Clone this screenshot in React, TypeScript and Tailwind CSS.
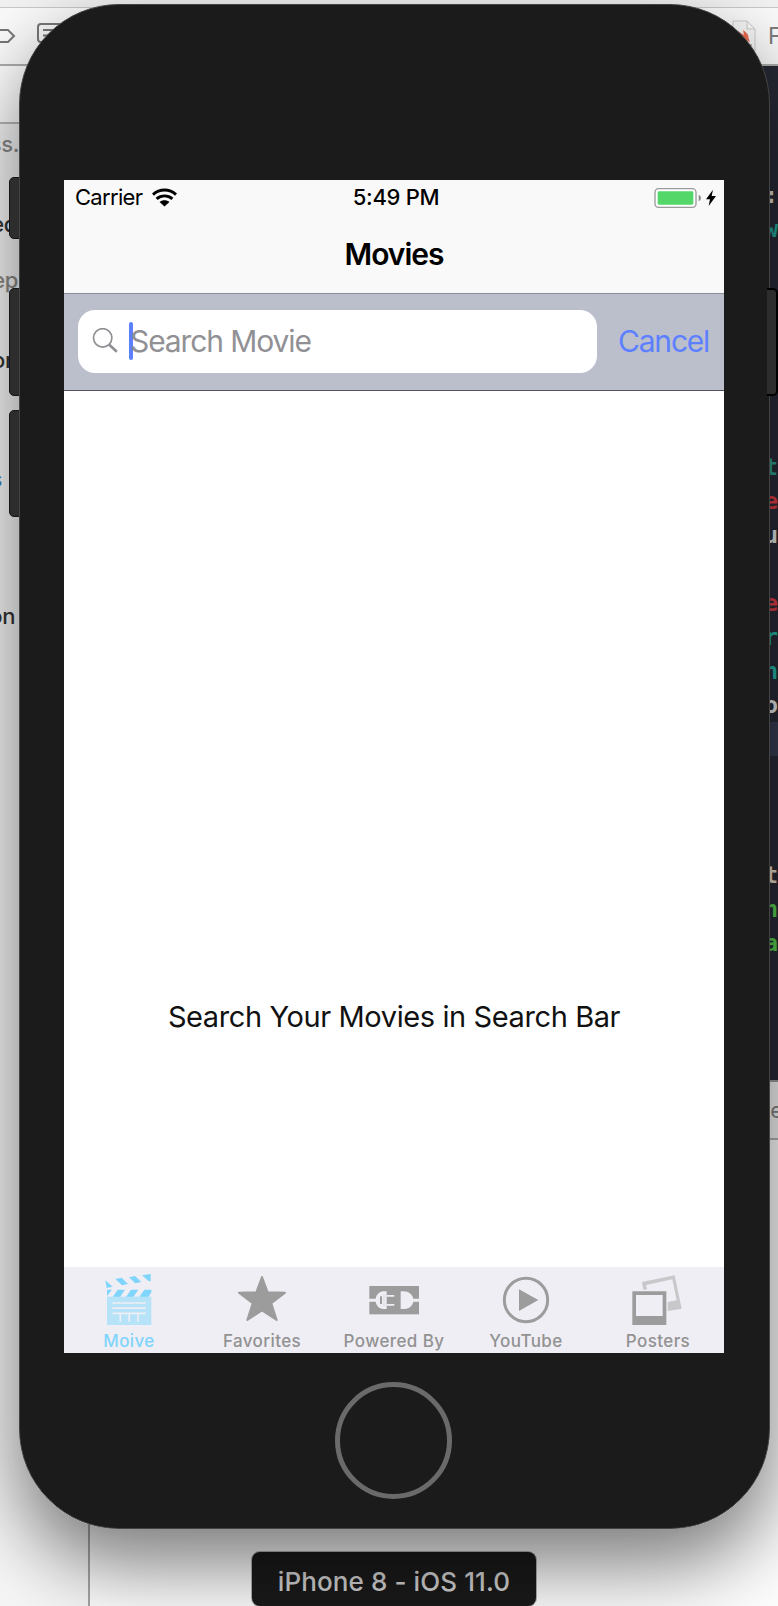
import type { ReactNode } from 'react';

const SYSTEM_FONT = "font-['Inter','Liberation_Sans',sans-serif]";

function ClapperIcon() {
  return (
    <svg viewBox="12 21 396 186" className="h-[62px] w-[132px]">
      <g fill="#7fd5fb">
        <path d="M136 61 L158 80 L140 84 Z" />
        <path d="M166 57 L185 53 L204 72 L186 76 Z" />
        <path d="M207 52 L225 48 L244 66 L226 70 Z" />
        <path d="M246 46 L272 42 V64 L266 63 Z" />
        <path d="M141 89 H156 L141 108 Z" />
        <path d="M173 89 H195 L180 111 H158 Z" />
        <path d="M213 89 H235 L220 111 H198 Z" />
        <path d="M253 89 H274 V97 L265 111 H238 Z" />
      </g>
      <rect x="141" y="110" width="133" height="85" fill="#b7e3f8" />
      <g stroke="#efeef4" strokeWidth="5">
        <path d="M157 129 H257 M157 144.500 H257 M157 160 H257" />
        <path d="M181 161 V185 M207.500 161 V185 M234 161 V185" />
      </g>
    </svg>
  );
}

function StarIcon() {
  return (
    <svg viewBox="408 21 396 186" className="h-[62px] w-[132px]">
      <path
        d="M606 51 L623 97 L675 98 L634 130 L650 180 L606 151 L562 180 L578 130 L537 98 L589 97 Z"
        fill="#9c9c9c"
        stroke="#9c9c9c"
        strokeWidth="6"
        strokeLinejoin="round"
      />
    </svg>
  );
}

function PlugIcon() {
  return (
    <svg viewBox="-96 -24 396 186" className="h-[62px] w-[132px]">
      <rect x="28" y="33" width="149" height="85" fill="#9c9c9c" />
      <g fill="#efeef4">
        <path d="M27 71 H47 C49 57 60 49 72 49 H80 V102 H72 C60 102 49 94 47 80 H27 Z" />
        <path d="M80 60 H103 V65 H80 Z M80 87 H103 V92 H80 Z" />
        <path d="M122 49 H130 C147 49 157 59 160 71 H178 V80 H160 C157 93 147 102 130 102 H122 Z" />
      </g>
      <rect x="60" y="64" width="6" height="23" fill="#9c9c9c" />
      <rect x="71" y="57" width="2" height="38" fill="#cfcfd3" />
    </svg>
  );
}

function PlayIcon() {
  return (
    <svg viewBox="180 21 396 186" className="h-[62px] w-[132px]">
      <circle cx="378" cy="120" r="65" fill="none" stroke="#9c9c9c" strokeWidth="9" />
      <path d="M357 88 L415 120 L357 153 Z" fill="#9c9c9c" />
    </svg>
  );
}

function PostersIcon() {
  return (
    <svg viewBox="576 21 396 186" className="h-[62px] w-[132px]">
      <g fill="#c8c8cb">
        <path d="M726 66 L824 46 L845 146 L803 153 V126 L830 121 L817 58 L738 75 L741 88 L730 89 Z" />
      </g>
      <path d="M697 94 H799 V195 H697 Z M708 105 V168 H788 V105 Z" fill="#9c9c9c" fillRule="evenodd" />
    </svg>
  );
}

function Tab({ icon, label, className }: { icon: ReactNode; label: string; className: string }) {
  return (
    <button className="flex w-[132px] flex-col items-center">
      {icon}
      <span className={`text-[17px] leading-[24px] font-medium tracking-[0.4px] whitespace-nowrap ${className}`}>{label}</span>
    </button>
  );
}

function StatusBar() {
  return (
    <div className="grid h-[35px] grid-cols-3 items-center text-black">
      <div className="flex items-center gap-[10px] pl-[11px]">
        <span className="text-[22px] leading-[35px] tracking-[-0.7px]">Carrier</span>
        <svg viewBox="278 40 76 56" className="h-[19px] w-[25px]">
          <g fill="none" stroke="#000" strokeWidth="9">
            <path d="M281 59 C301 41 331 41 351 59" />
            <path d="M292 72 C306 60 326 60 340 72" />
          </g>
          <path d="M301 82 C309 74 323 74 331 82 L316 95 Z" fill="#000" />
        </svg>
      </div>
      <span className="pl-[4px] text-center text-[22px] leading-[35px] font-medium tracking-[-0.3px] whitespace-nowrap">
        5:49 PM
      </span>
      <div className="flex justify-end pr-[8px]">
        <svg viewBox="760 36 186 66" className="h-[22px] w-[62px]">
          <rect x="763" y="41" width="123" height="56" rx="11" fill="#fff" stroke="#9a9a9a" strokeWidth="4" />
          <rect x="771" y="49" width="107" height="40" rx="4" fill="#53d769" />
          <path d="M894 59 Q901 62 901 69 Q901 76 894 79 Z" fill="#8c8c8c" />
          <path d="M937 44 L916 73 H928 L924 93 L946 63 H933 Z" fill="#000" />
        </svg>
      </div>
    </div>
  );
}

function SearchBar() {
  return (
    <div className="flex h-[98px] items-center border-y border-t-[#8b8d9a] border-b-[#55525f] bg-[#bbbfcc] pb-[2px] pl-[14px]">
      <div className="flex h-[63px] w-[519px] items-center rounded-[17px] bg-white pb-px pl-[14px]">
        <svg viewBox="94 460 78 76" className="h-[25px] w-[26px]">
          <circle cx="126" cy="490" r="28" fill="none" stroke="#8e8e93" strokeWidth="5" />
          <path d="M146 511 L169 532" stroke="#8e8e93" strokeWidth="8" />
        </svg>
        <span className="ml-[11px] h-[38px] w-[4px] rounded-sm bg-[#5c80ff]" />
        <span className="-ml-[3px] text-[30px] leading-[40px] tracking-[-1.1px] text-[#919195]">Search Movie</span>
      </div>
      <button className="ml-[21px] pb-px text-[30px] leading-[40px] tracking-[-1.2px] text-[#5c80ff]">Cancel</button>
    </div>
  );
}

function Screen() {
  return (
    <div className="flex h-[1173px] w-[660px] flex-col bg-white">
      <header className="h-[113px] bg-[#f9f9f9]">
        <StatusBar />
        <h1 className="text-center text-[30px] leading-[78px] font-semibold tracking-[-1px] text-black">Movies</h1>
      </header>
      <SearchBar />
      <main className="flex flex-1 flex-col items-center justify-end pb-[230px]">
        <p className="text-[29px] leading-[40px] tracking-[-0.4px] whitespace-nowrap text-[#111]">
          Search Your Movies in Search Bar
        </p>
      </main>
      <nav className="flex h-[86px] bg-[#efeef4]">
        <Tab icon={<ClapperIcon />} label="Moive" className="-ml-[2px] text-[#7fd5fb]" />
        <Tab icon={<StarIcon />} label="Favorites" className="text-[#929292]" />
        <Tab icon={<PlugIcon />} label="Powered By" className="text-[#929292]" />
        <Tab icon={<PlayIcon />} label="YouTube" className="text-[#929292]" />
        <Tab icon={<PostersIcon />} label="Posters" className="text-[#929292]" />
      </nav>
    </div>
  );
}

const codeLines = [
  { text: ':', className: 'text-[#d9d3cd]' },
  { text: 'w', className: 'text-[#22a598]' },
  { text: '', className: '' },
  { text: '', className: '' },
  { text: '', className: '' },
  { text: '', className: '' },
  { text: '', className: '' },
  { text: '', className: '' },
  { text: 't', className: 'text-[#2f9a8a]' },
  { text: 'e', className: 'text-[#d83a45]' },
  { text: 'u', className: 'text-[#e0e0e0]' },
  { text: '', className: '' },
  { text: 'e', className: 'text-[#d83a45]' },
  { text: 'r', className: 'text-[#24b0a2]' },
  { text: 'n', className: 'text-[#24b0a2]' },
  { text: 'o', className: 'text-[#e0e0e0]' },
  { text: '', className: 'bg-[#353a50]' },
  { text: '', className: '' },
  { text: '', className: '' },
  { text: '', className: '' },
  { text: 't', className: 'text-[#e0d4c4]' },
  { text: 'n', className: 'text-[#55c94d]' },
  { text: 'a', className: 'text-[#55c94d]' },
];

const sidebarLines = [
  { text: 'ss.', className: 'h-[80px] pr-0 text-[#8a8a8a]' },
  { text: 'ed', className: 'h-[56px] pr-[2px] text-[#333]' },
  { text: 'ep', className: 'h-[80px] pr-[1px] text-[#8a8a84]' },
  { text: 'or', className: 'h-[119px] pr-[6px] text-[#333]' },
  { text: 's', className: 'h-[137px] pr-[17px] text-[#3a7fb5]' },
  { text: 'on', className: 'h-[40px] pr-[4px] text-[#333]' },
];

function EditorWindow() {
  return (
    <div className="absolute inset-0 flex flex-col bg-[#fdfdfd]">
      <div className="h-[8px] border-b border-[#c9c9c9] bg-[#f2f2f2]" />
      <div className="flex h-[58px] items-center justify-between border-b-2 border-[#adadad] bg-[#fafafa]">
        <svg viewBox="0 0 80 56" className="h-[56px] w-[80px]" fill="none" stroke="#777" strokeWidth="2">
          <path d="M0 22 H8 L14 28 L8 34 H0" />
          <path d="M60 16 H41 Q38 16 38 19 V31 Q38 34 41 34 H60" />
          <path d="M43 22 H60 M43 27.500 H60" />
        </svg>
        <div className="flex items-center">
          <svg viewBox="0 0 24 32" className="h-[32px] w-[24px]">
            <path d="M1 1 H15 L23 9 V31 H1 Z M15 1 V9 H23" fill="#f8f8f8" stroke="#ccc" />
            <path d="M6 11 L12 15 L11 10 Q17 14 16.500 18 L18 22 L15 20.500 Q11 21 7 17 L12 18 Z" fill="#ee6c4f" />
            <path d="M16 25 H20 M18 25 V29" stroke="#777" />
          </svg>
          <span className="ml-[12px] w-[10px] overflow-hidden text-[23px] text-[#7c7c7c]">F</span>
        </div>
      </div>
      <div className="flex flex-1">
        <div className="flex w-[90px] flex-col border-r-2 border-[#a5a5a5] bg-[#f6f6f6]">
          <div className="h-[58px] border-b-2 border-[#b8b8b8] bg-[#fdfdfd]" />
          <div className="w-[19px] overflow-hidden pt-[6px]">
            {sidebarLines.map((line) => (
              <div
                key={line.text}
                className={`flex justify-end text-[22px] leading-[28px] font-medium tracking-[-0.4px] whitespace-nowrap ${line.className}`}
              >
                {line.text}
              </div>
            ))}
          </div>
        </div>
        <div className="flex flex-1 flex-col">
          <div className="h-[1014px] bg-[#272935] pt-[112px] font-['DejaVu_Sans_Mono','Liberation_Mono',monospace]">
            {codeLines.map((line, index) => (
              <div key={index} className={`h-[34px] text-right text-[23px] leading-[34px] font-bold ${line.className}`}>
                {line.text}
              </div>
            ))}
          </div>
          <div className="flex h-[60px] items-center justify-end border-t-2 border-b-2 border-t-[#999] border-b-[#b0b0b0] bg-[#f2f2f2]">
            <span className="-mr-[5px] text-[22px] text-[#808080]">e</span>
          </div>
        </div>
      </div>
    </div>
  );
}

export default function App() {
  return (
    <div className={`relative h-[1606px] w-[778px] overflow-hidden ${SYSTEM_FONT}`}>
      <EditorWindow />
      <div className="relative flex flex-col pt-[4px] pl-[19px]">
        <div className="relative flex h-[1525px] w-[751px] flex-col rounded-[100px] shadow-[0_35px_80px_rgba(0,0,0,0.53)]">
          <span className="absolute top-[173px] -left-[10px] h-[62px] w-[20px] rounded-[5px] border border-[#161616] bg-[#2d2d2d]" />
          <span className="absolute top-[284px] -left-[10px] h-[108px] w-[20px] rounded-[5px] border border-[#161616] bg-[#2d2d2d]" />
          <span className="absolute top-[406px] -left-[10px] h-[107px] w-[20px] rounded-[5px] border border-[#161616] bg-[#2d2d2d]" />
          <div className="relative flex h-[1525px] w-[751px] flex-col rounded-[100px] border border-[#444] bg-[#1b1b1b] pt-[175px] pl-[44px]">
            <Screen />
            <button aria-label="Home" className="mt-[29px] ml-[271px] h-[117px] w-[117px] rounded-full border-[5px] border-[#6a6a6a]" />
          </div>
          <span className="absolute top-[284px] -right-[8px] h-[108px] w-[11px] rounded-r-[5px] border-2 border-l-0 border-black bg-[#2d2d2d]" />
        </div>
        <div className="mt-[23px] ml-[233px] flex h-[54px] w-[284px] items-center justify-center rounded-[8px] bg-[#1a1a1a] pt-[6px] text-[26px] tracking-[0.1px] text-[#d2d2d2] ring-1 ring-[#b0b3b0]">
          <span className="leading-[34px] font-medium whitespace-nowrap">iPhone 8 - iOS 11.0</span>
        </div>
      </div>
    </div>
  );
}
